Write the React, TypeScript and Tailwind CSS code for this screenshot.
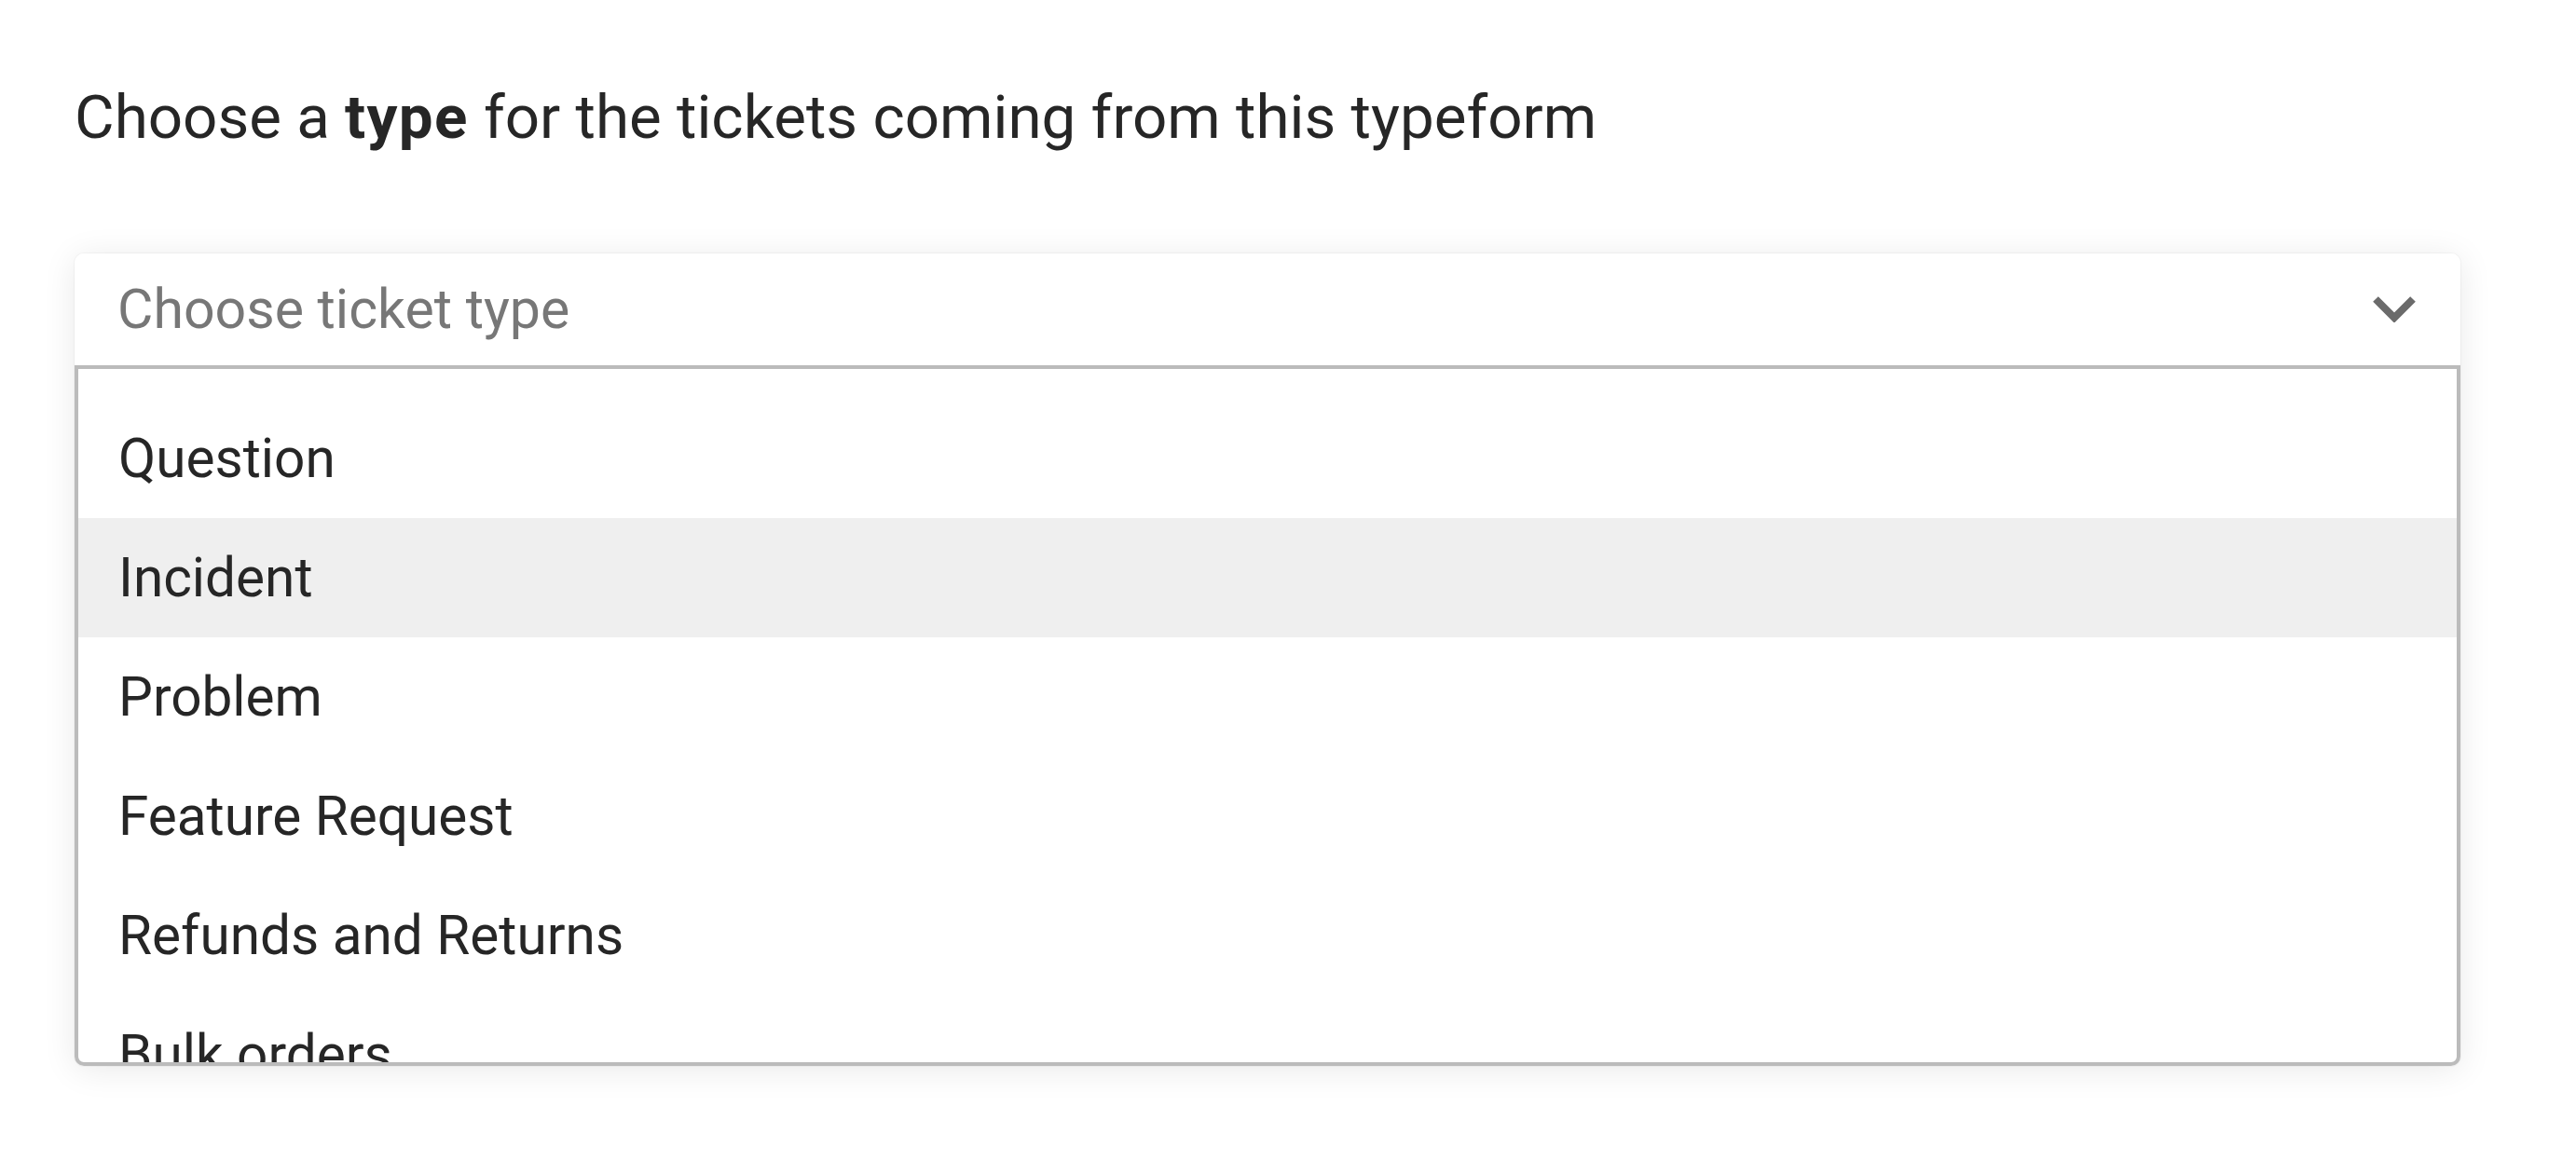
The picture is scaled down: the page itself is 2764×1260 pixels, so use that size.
import React from "react";

const items = ["Question", "Incident", "Problem", "Feature Request", "Refunds and Returns", "Bulk orders"];

export default function App() {
  return (
    <div
      className="min-h-[1260px] w-[2764px] bg-white pl-[80px] pt-[86px]"
      style={{ fontFamily: "Roboto, 'Liberation Sans', sans-serif" }}
    >
      <h1 className="text-[65.5px] leading-[80px] font-normal text-[#262626]">
        Choose a <span className="font-bold tracking-[0.02em]">type</span> for the tickets coming from this typeform
      </h1>
      <div className="mt-[106px] w-[2560px] rounded-[10px] bg-white shadow-[0_0_0_1px_rgba(0,0,0,0.03),0_4px_36px_rgba(0,0,0,0.09)]">
        <div className="flex h-[120px] items-center justify-between rounded-t-[10px] bg-white pl-[46px] pr-[48px]">
          <span className="text-[59px] leading-[70px] text-[#777777]">Choose ticket type</span>
          <svg width="46" height="28" viewBox="0 0 46 28" fill="none">
            <polyline points="3,3 23,23 43,3" stroke="#6b6b6b" strokeWidth="8" strokeLinejoin="miter" fill="none" />
          </svg>
        </div>
        <div className="h-[752px] overflow-hidden rounded-b-[10px] border-4 border-[#bbbbbb] bg-white pt-[32px]">
          {items.map((it) => (
            <div
              key={it}
              className={`flex h-[128px] items-center pl-[43px] text-[58.5px] leading-[70px] text-[#262626] ${
                it === "Incident" ? "bg-[#efefef]" : ""
              }`}
            >
              {it}
            </div>
          ))}
        </div>
      </div>
    </div>
  );
}
